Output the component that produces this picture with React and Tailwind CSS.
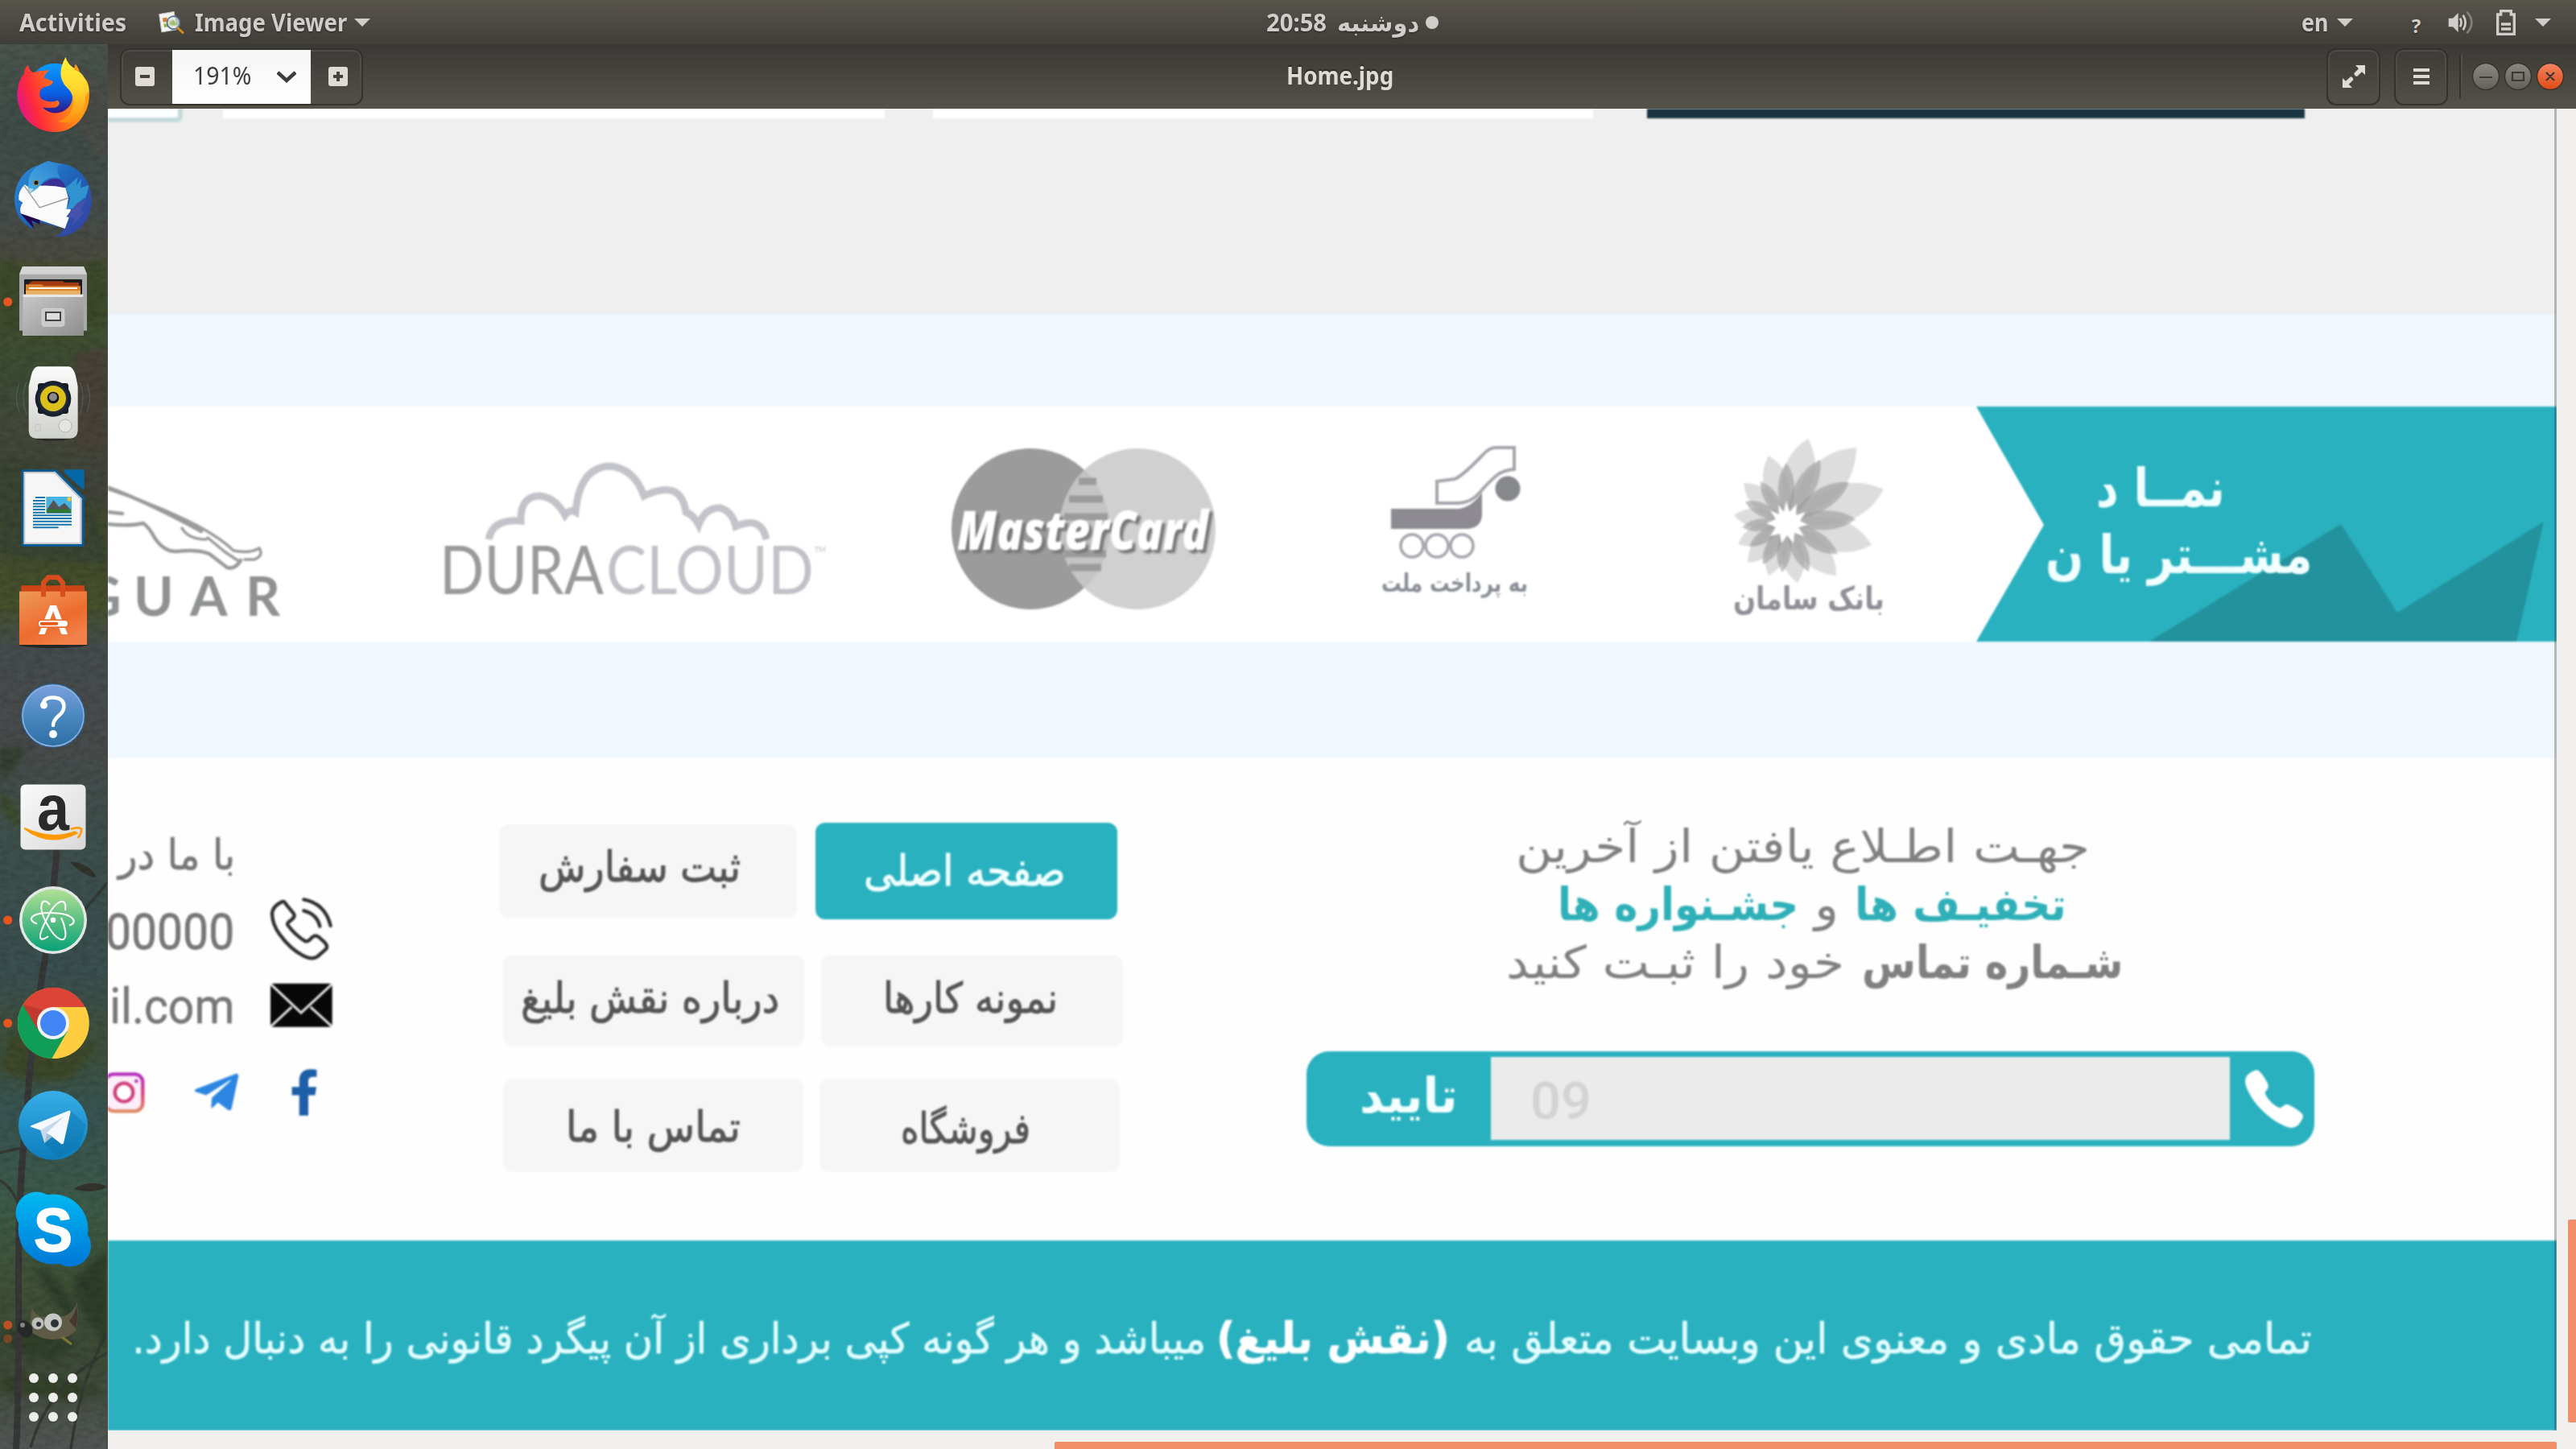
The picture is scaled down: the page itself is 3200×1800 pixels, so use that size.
import { useLayoutEffect, useRef, useState } from "react";
import { IoCall } from "react-icons/io5";
import { FaFacebookF, FaTelegramPlane } from "react-icons/fa";

/* Stretches one line of text to a given width. */
function Fit({ w, className = "", children, dir = "rtl" }) {
  const ref = useRef(null);
  const [k, setK] = useState(1);
  useLayoutEffect(() => {
    if (ref.current && ref.current.offsetWidth) setK(w / ref.current.offsetWidth);
  }, [w]);
  return (
    <div className={"shrink-0 " + className} style={{ width: w }} dir="ltr">
      <span
        ref={ref}
        dir={dir}
        className="inline-block origin-left whitespace-nowrap"
        style={{ transform: `scaleX(${k})` }}
      >
        {children}
      </span>
    </div>
  );
}

const FA = "font-['DejaVu_Sans',sans-serif]";

function Caret() {
  return (
    <svg className="h-[10px] w-5 shrink-0" viewBox="0 0 20 10">
      <path d="M0 0H20L10 10Z" fill="#cfcdca" />
    </svg>
  );
}

function TopBar() {
  return (
    <header className="flex h-[55px] shrink-0 items-center bg-linear-to-b from-[#59554d] to-[#403e39] font-['Noto_Sans','DejaVu_Sans',sans-serif] text-[30px] leading-[54px] font-bold text-[#d0cecb] [text-shadow:0_1px_2px_#222]">
      <div className="flex w-[1573px] items-center pl-6">
        <Fit w={133} dir="ltr">Activities</Fit>
        <svg className="ml-10 h-8 w-8" viewBox="590 30 100 95">
          <path d="M592 45L650 35L660 105L602 115Z" fill="#f4f4f0" stroke="#bbb" strokeWidth="3" />
          <path d="M604 62L642 56L648 92L612 98Z" fill="#dfe6cf" />
          <path d="M606 60L622 58L624 74L608 76ZM628 70L640 68L642 78L630 80Z" fill="#d77b32" />
          <path d="M610 84L644 78L646 90L612 96Z" fill="#8fb04f" />
          <circle cx="648" cy="78" r="25" fill="#dfe9e4" fillOpacity=".75" stroke="#56708f" strokeWidth="5" />
          <path d="M632 82L646 66L662 84L650 90Z" fill="#a6bf72" />
          <path d="M664 98L684 117" stroke="#d28a1c" strokeWidth="9" strokeLinecap="round" />
        </svg>
        <Fit w={189} dir="ltr" className="ml-[13px]">Image Viewer</Fit>
        <div className="ml-[9px]"><Caret /></div>
      </div>
      <div className="flex w-[1286px] items-center">
        <Fit w={75} dir="ltr">20:58</Fit>
        <Fit w={102} className="ml-[13px]">دوشنبه</Fit>
        <div className="ml-[8px] h-4 w-4 rounded-full bg-[#d0cecb]" />
      </div>
      <div className="flex items-center">
        <Fit w={33} dir="ltr">en</Fit>
        <div className="ml-[11px]"><Caret /></div>
        <div className="ml-[69px] flex h-8 w-[19px] items-center justify-center pt-2 text-[24px] leading-6">?</div>
        <svg className="ml-[30px] h-8 w-8" viewBox="724 36 96 92">
          <path d="M726 66H742L762 46V118L742 98H726Z" fill="#d0cecb" />
          <path d="M769 66Q778 82 769 98M780 54Q798 82 780 110" fill="none" stroke="#d0cecb" strokeWidth="8" />
          <path d="M794 42Q830 82 794 122" fill="none" stroke="#83807a" strokeWidth="8" />
        </svg>
        <svg className="ml-7 h-8 w-6" viewBox="906 33 72 96">
          <path d="M911 124V51H923V38H961V51H973V124Z" fill="none" stroke="#d0cecb" strokeWidth="10" />
          <path d="M924 87H960M924 105H960" stroke="#d0cecb" strokeWidth="10" />
        </svg>
        <div className="ml-6"><Caret /></div>
      </div>
    </header>
  );
}

function TitleBar() {
  const outline = "rounded-[12px] border-2 border-[#33322e] shadow-[inset_0_0_0_2px_#4f4d47]";
  return (
    <div className="flex h-20 shrink-0 items-center bg-linear-to-b from-[#3b3935] to-[#55524a] font-['Noto_Sans',sans-serif] leading-[44px]">
      <div className={"ml-[15px] flex h-[71px] w-[302px] items-center overflow-hidden " + outline}>
        <div className="flex w-[63px] justify-center pr-[5px]">
          <div className="flex h-6 w-6 items-center justify-center rounded-[3px] bg-[#e0dbd4]"><div className="h-1 w-3 bg-[#45433e]" /></div>
        </div>
        <div className="flex h-[68px] w-[172px] items-center bg-linear-to-b from-[#f5f5f5] to-white pl-[26px] text-[30px] text-[#3c3c3c]">
          <Fit w={72} dir="ltr" className="pb-[2px]">191%</Fit>
          <svg className="ml-8 h-[15px] w-6" viewBox="0 0 24 15"><path d="M1 2L12 12L23 2" fill="none" stroke="#3c3c3c" strokeWidth="4.5" /></svg>
        </div>
        <div className="flex w-[63px] justify-center pl-[4px]">
          <svg className="h-6 w-6" viewBox="0 0 24 24"><rect width="24" height="24" rx="3" fill="#e0dbd4" /><path d="M6 12H18M12 6V18" stroke="#45433e" strokeWidth="4" /></svg>
        </div>
      </div>
      <Fit w={133} dir="ltr" className="ml-[1147px] pb-[2px] text-[30px] font-bold text-[#e0dbd4] [text-shadow:0_-2px_1px_#2b2a27]">Home.jpg</Fit>
      <div className={"ml-[1159px] flex h-[71px] w-[67px] items-center justify-center " + outline}>
        <svg className="h-7 w-7" viewBox="330 243 84 84" fill="#e0dbd4">
          <path d="M378 243H414V279L402 268L384 285Q374 283 373 273L390 256Z" />
          <path d="M366 327H330V291L342 302L360 286Q370 288 370 298L353 314Z" />
        </svg>
      </div>
      <div className={"ml-[17px] flex h-[71px] w-[67px] flex-col items-center justify-center gap-1 " + outline}>
        <div className="h-1 w-5 bg-[#e0dbd4]" />
        <div className="h-1 w-5 bg-[#e0dbd4]" />
        <div className="h-1 w-5 bg-[#e0dbd4]" />
      </div>
      <div className="ml-[14px] h-14 w-1 border-l-2 border-[#35332f] bg-[#504e48]" />
      <svg className="ml-[11px] h-9 w-[118px]" viewBox="3070 77 118 36">
        <defs>
          <linearGradient id="wb" x1="0" y1="0" x2="0" y2="1"><stop stopColor="#8a8881" /><stop offset="1" stopColor="#62605a" /></linearGradient>
          <linearGradient id="wc" x1="0" y1="0" x2="0" y2="1"><stop stopColor="#f68460" /><stop offset="1" stopColor="#df4a16" /></linearGradient>
        </defs>
        <circle cx="3088" cy="95" r="16.5" fill="url(#wb)" stroke="#35332f" strokeWidth="1.5" />
        <circle cx="3128" cy="95" r="16.5" fill="url(#wb)" stroke="#35332f" strokeWidth="1.5" />
        <circle cx="3168" cy="95" r="16.5" fill="url(#wc)" stroke="#35332f" strokeWidth="1.5" />
        <path d="M3080 96H3096M3121 90H3135V100H3121ZM3163 90L3173 100M3173 90L3163 100" fill="none" stroke="#3a3833" strokeWidth="2.2" />
      </svg>
    </div>
  );
}

/* Dock icons are drawn in dock coordinates; every cell is 128 pixels high. */
function Cell({ i, h = 128, children }) {
  return (
    <svg className="relative w-[134px] shrink-0 overflow-visible" style={{ height: h }} viewBox={`0 ${55 + i * 128} 134 ${h}`}>
      {children}
    </svg>
  );
}

function Dot({ y, o = 1 }) {
  return <circle cx="9.7" cy={y} r="5.6" fill="#e95420" opacity={o} />;
}

function DockBackground() {
  return (
    <svg className="absolute inset-0 h-full w-full" viewBox="0 55 134 1745" preserveAspectRatio="none">
      <defs>
        <linearGradient id="dk" x1="0" y1="0" x2="0" y2="1">
          <stop stopColor="#4b544e" /><stop offset=".06" stopColor="#3f4d47" /><stop offset=".12" stopColor="#454d4a" />
          <stop offset=".15" stopColor="#4a4a41" /><stop offset=".165" stopColor="#46532e" /><stop offset=".23" stopColor="#3d4c33" />
          <stop offset=".28" stopColor="#44483b" /><stop offset=".32" stopColor="#40433b" /><stop offset=".34" stopColor="#414b2d" />
          <stop offset=".4" stopColor="#45502c" /><stop offset=".43" stopColor="#464c4e" /><stop offset=".5" stopColor="#484b4b" />
          <stop offset=".56" stopColor="#3e504c" /><stop offset=".66" stopColor="#3a4f50" /><stop offset=".71" stopColor="#3f503b" />
          <stop offset=".76" stopColor="#385452" /><stop offset=".83" stopColor="#3d5a48" /><stop offset=".88" stopColor="#3f5236" />
          <stop offset=".94" stopColor="#3e4a38" /><stop offset="1" stopColor="#535756" />
        </linearGradient>
        <filter id="bl"><feGaussianBlur stdDeviation="4" /></filter>
        <filter id="grain" x="0" y="0" width="100%" height="100%">
          <feTurbulence type="fractalNoise" baseFrequency=".09 .16" numOctaves="3" />
          <feColorMatrix values="0 0 0 0 0  0 0 0 0 0  0 0 0 0 0  1.4 0 0 0 -.5" />
        </filter>
      </defs>
      <rect y="55" width="134" height="1745" fill="url(#dk)" />
      <g filter="url(#bl)">
        <path d="M60 55L134 110V200Q90 180 60 55Z" fill="#504d4a" opacity=".7" />
        <path d="M0 320Q60 350 134 320V390Q60 440 0 400Z" fill="#3c4a2a" />
        <path d="M92 440L134 430V560H96Z" fill="#4a4238" />
        <path d="M0 570Q60 570 90 600T134 690V700L0 690Z" fill="#3a4530" />
        <path d="M0 930L30 925Q24 960 0 968Z" fill="#353f30" />
        <path d="M0 985Q30 1000 26 1030Q10 1020 0 1000Z" fill="#3d4c2c" />
        <path d="M10 1290Q60 1270 120 1300L90 1340Q40 1350 0 1330Z" fill="#3c4a2c" />
        <path d="M44 1570Q90 1600 96 1640Q60 1620 44 1570ZM90 1590L134 1550V1670Q100 1640 90 1590Z" fill="#2f3c2a" />
        <path d="M0 1650Q60 1650 100 1670L70 1690Q30 1690 0 1665Z" fill="#33402a" />
        <path d="M0 1710Q70 1700 134 1730L80 1740Q30 1730 0 1730Z" fill="#34422b" />
      </g>
      <path d="M71 1050Q66 1120 56 1190Q38 1300 34 1370Q22 1480 23 1600T20 1800" fill="none" stroke="#383838" strokeWidth="8" />
      <path d="M0 1466Q18 1478 24 1500M134 1655Q100 1710 88 1800M134 1680Q60 1720 38 1798M100 1136L134 1096M0 1432L60 1418" fill="none" stroke="#363a34" strokeWidth="3.5" />
      <path d="M92 1477Q110 1464 134 1474Q118 1484 92 1477ZM86 1070Q112 1072 120 1090Q106 1090 86 1070Z" fill="#34342f" />
      <rect y="55" width="134" height="1745" filter="url(#grain)" opacity=".2" />
      <rect x="132" y="55" width="2" height="1745" fill="#4a4a46" opacity=".7" />
    </svg>
  );
}

function Dock() {
  return (
    <nav className="relative flex w-[134px] shrink-0 flex-col overflow-hidden">
      <DockBackground />
      {/* Firefox */}
      <Cell i={0}>
        <defs>
          <linearGradient id="ff1" x1="0" y1=".6" x2="1" y2=".3"><stop stopColor="#e0168a" /><stop offset=".22" stopColor="#ff2b3a" /><stop offset=".6" stopColor="#ff7a1a" /><stop offset="1" stopColor="#ffb81c" /></linearGradient>
          <linearGradient id="ff2" x1="0" y1="0" x2="0" y2="1"><stop stopColor="#0a9bff" /><stop offset=".6" stopColor="#0a5de0" /><stop offset="1" stopColor="#35107a" /></linearGradient>
          <linearGradient id="ff3" x1="0" y1="0" x2="0" y2="1"><stop stopColor="#fff23a" /><stop offset=".5" stopColor="#ffd42e" /><stop offset="1" stopColor="#ff8a10" /></linearGradient>
        </defs>
        <g transform="scale(.33333)">
          <circle cx="204" cy="332" r="96" fill="url(#ff2)" />
          <path d="M105 242Q108 262 122 270Q152 262 184 262Q166 276 164 290L198 303Q196 320 165 324Q148 332 148 348Q146 368 166 374Q190 384 215 374Q230 386 210 400Q180 404 158 400Q190 432 232 416Q282 392 266 336L300 280Q336 300 332 350C330 435 275 492 204 492C125 492 64 430 64 352Q66 300 90 274Q90 254 105 242Z" fill="url(#ff1)" />
          <path d="M245 212Q248 240 290 262Q328 292 331 345Q330 385 312 425Q275 470 215 452Q262 440 272 392Q278 350 248 325Q206 280 245 212Z" fill="url(#ff3)" />
          <path d="M280 238Q294 252 296 270L276 258Z" fill="#ff9a10" />
          <path d="M331 340Q338 400 300 440Q320 400 318 360Z" fill="#ff9a10" />
        </g>
      </Cell>
      {/* Thunderbird */}
      <Cell i={1}>
        <defs>
          <linearGradient id="tb" x1="0" y1="0" x2="1" y2="1"><stop stopColor="#2a8fd8" /><stop offset=".5" stopColor="#1f62b8" /><stop offset="1" stopColor="#3a3c9e" /></linearGradient>
          <linearGradient id="tb2" x1="1" y1="0" x2="0" y2="1"><stop stopColor="#2b7fd0" /><stop offset="1" stopColor="#4aaee2" /></linearGradient>
        </defs>
        <g transform="scale(.33333)">
          <path d="M180 600Q160 606 158 612C90 625 54 680 54 748C56 800 85 840 128 854L118 830Q150 838 148 828L240 852Q222 878 202 882C290 886 342 820 342 745C340 660 280 606 205 608Z" fill="url(#tb)" />
          <path d="M76 795L128 854L118 822L148 836V815Z" fill="#22094e" />
          <path d="M92 688Q66 715 70 745L85 755Q70 775 78 796L242 852Q258 815 264 780L248 776L255 738L244 700Q190 680 108 698Z" fill="#fafafa" />
          <path d="M90 692L148 774L254 738" fill="none" stroke="#9c9c9c" strokeWidth="4" />
          <path d="M150 692Q190 655 225 670Q248 690 242 700Q200 690 150 692Z" fill="#3b2f94" />
          <path d="M180 600Q120 620 108 665L104 705L112 720Q140 705 150 690Q180 650 225 665Q200 620 230 612Z" fill="url(#tb2)" />
          <path d="M104 700L112 720L126 704Z" fill="#b8d8dc" />
          <circle cx="135" cy="681" r="9" fill="#1b1b1b" stroke="#a57a20" strokeWidth="3" />
          <path d="M245 700L290 660L285 690L304 665L300 700L332 690L320 735L285 760L290 775L247 780L262 740Z" fill="#2f93cf" />
          <path d="M285 760L322 742L300 790L318 790L270 840L278 815L247 808L268 780Z" fill="#4553ac" />
        </g>
      </Cell>
      {/* Files */}
      <Cell i={2}>
        <defs><linearGradient id="fl" x1="0" y1="0" x2="1" y2="1"><stop stopColor="#c9c9c9" /><stop offset="1" stopColor="#8d8d8d" /></linearGradient></defs>
        <Dot y={375} />
        <g transform="scale(.33333)">
          <path d="M84 993H312L324 1022V1232H72V1022Z" fill="#a9a9a9" />
          <path d="M84 993H312L324 1022H72Z" fill="#d4d4d4" />
          <rect x="90" y="1041" width="216" height="60" rx="4" fill="#1c1c1c" />
          <path d="M108 1056L120 1048H234L240 1053H294V1100H108Z" fill="#a33a12" />
          <path d="M96 1060H156L162 1066H300V1100H96Z" fill="#d98532" />
          <rect x="108" y="1071" width="180" height="6" fill="#fff" /><rect x="96" y="1083" width="204" height="14" fill="#e9b062" />
          <path d="M86 1097H310L312 1251H84Z" fill="url(#fl)" />
          <path d="M86 1097H310V1107H86Z" fill="#e8e8e8" />
          <rect x="156" y="1150" width="84" height="66" rx="10" fill="#c9c9c9" stroke="#dedede" strokeWidth="2" />
          <rect x="171" y="1164" width="54" height="30" fill="#ddd" stroke="#444" strokeWidth="6" />
        </g>
      </Cell>
      {/* Rhythmbox */}
      <Cell i={3}>
        <defs><linearGradient id="rb" x1="0" y1="0" x2="0" y2="1"><stop stopColor="#fafafa" /><stop offset="1" stopColor="#cfd1cc" /></linearGradient></defs>
        <g transform="translate(0 440) scale(.33333)">
          <ellipse cx="198" cy="305" rx="85" ry="18" fill="#000" opacity=".35" />
          <path d="M140 46H256Q272 46 282 80L290 120V285Q288 314 262 314H134Q108 314 107 285V120L116 80Q124 48 140 46Z" fill="url(#rb)" />
          <path d="M72 110Q50 160 72 215M98 105Q75 160 98 225M324 110Q346 160 324 215M298 105Q320 160 298 225" fill="none" stroke="#6e93c4" strokeWidth="3" opacity=".35" />
          <rect x="141" y="108" width="114" height="114" rx="10" fill="#181c20" />
          <circle cx="198" cy="166" r="67" fill="#16202e" /><circle cx="198" cy="166" r="56" fill="#202a38" />
          <circle cx="198" cy="165" r="48" fill="#dcc01c" /><circle cx="198" cy="162" r="22" fill="#111" /><circle cx="198" cy="160" r="15" fill="#8b8b8b" />
          <circle cx="243" cy="267" r="24" fill="#e4e5e2" stroke="#b4b6b2" strokeWidth="3" />
          <rect x="132" y="262" width="18" height="24" fill="none" stroke="#c4c6c2" strokeWidth="3" />
        </g>
      </Cell>
      {/* LibreOffice Writer */}
      <Cell i={4}>
        <g transform="translate(0 440) scale(.33333)">
          <path d="M86 430H210L314 532V711Q314 717 308 717H86Q80 717 80 711V436Q80 430 86 430Z" fill="#0a5a94" />
          <path d="M88 438H206L305 538V708H88Z" fill="#c9c9cd" /><path d="M94 444H203L298 540V702H94Z" fill="#f6f6f6" />
          <path d="M238 430H308Q314 430 314 436V504Q300 500 240 440Z" fill="#0567a6" />
          <rect x="172" y="531" width="95" height="63" fill="#46b3e6" /><path d="M175 578L200 543L220 570L240 554L264 580V592H175Z" fill="#555" /><path d="M175 578H264V590H175Z" fill="#2b7a2e" /><circle cx="258" cy="540" r="8" fill="#f0c83c" />
          <path d="M132 534H168M123 546H168M123 557H168M123 568H168M123 579H168M123 590H168M123 601H267M123 612H267M123 623H267M123 635H267M123 646H218" stroke="#1878ad" strokeWidth="6" />
        </g>
      </Cell>
      {/* Ubuntu Software */}
      <Cell i={5}>
        <defs><linearGradient id="us" x1="0" y1="0" x2=".6" y2="1"><stop stopColor="#eb9a57" /><stop offset=".4" stopColor="#ef7d42" /><stop offset=".65" stopColor="#ed6c2c" /><stop offset="1" stopColor="#f28149" /></linearGradient></defs>
        <g transform="translate(0 440) scale(.33333)">
          <ellipse cx="198" cy="1083" rx="128" ry="12" opacity=".45" />
          <path d="M80 862H315V890H80Z" fill="#cf4414" />
          <path d="M72 884L90 878L80 862V1083H324V884L304 878L315 862V884Z" fill="#cf4414" />
          <rect x="72" y="884" width="252" height="199" fill="url(#us)" />
          <path d="M162 904V852L180 832H216L234 852V904" fill="none" stroke="#d94c1c" strokeWidth="18" />
          <text x="198" y="1043" textAnchor="middle" fontFamily="Lato" fontWeight="900" fontSize="150" fill="#fff">A</text>
          <rect x="140" y="988" width="116" height="32" fill="#ed6f30" /><rect x="144" y="993" width="108" height="22" rx="11" fill="#fff" /><rect x="149" y="998" width="68" height="12" rx="6" fill="#e85a18" />
        </g>
      </Cell>
      {/* Help */}
      <Cell i={6}>
        <defs><linearGradient id="hp" x1="0" y1="0" x2="0" y2="1"><stop stopColor="#7ba0dc" /><stop offset=".5" stopColor="#4a88bf" /><stop offset="1" stopColor="#2d6ea5" /></linearGradient></defs>
        <circle cx="66" cy="889" r="40" fill="#2b6299" /><circle cx="66" cy="889" r="38" fill="url(#hp)" stroke="#8fb5e0" strokeWidth="1.5" />
        <path d="M53.500 876Q54 866.500 65 866.500Q79 866.500 79.500 877Q79.500 884 73 889Q66 895 66 901" fill="none" stroke="#fff" strokeWidth="4.500" strokeLinecap="round" />
        <circle cx="54.500" cy="876" r="4.500" fill="#fff" /><circle cx="66" cy="912" r="5" fill="#fff" />
      </Cell>
      {/* Amazon */}
      <Cell i={7}>
        <defs><linearGradient id="am" x1="0" y1="0" x2="1" y2="1"><stop stopColor="#fbfbfb" /><stop offset="1" stopColor="#d8d8d8" /></linearGradient></defs>
        <rect x="25.500" y="974.500" width="81" height="81" rx="6" fill="url(#am)" />
        <text x="66" y="1030.500" textAnchor="middle" fontFamily="Liberation Sans" fontWeight="700" fontSize="80" fill="#2a2a2a" textLength="40" lengthAdjust="spacingAndGlyphs">a</text>
        <path d="M30.500 1029.500Q60 1053 96 1035L93 1033Q65 1044 31 1029Z" fill="#ff9900" stroke="#ff9900" strokeWidth="1.500" />
        <path d="M88 1030Q96 1027 101 1029.500Q102 1035 96.500 1041" fill="none" stroke="#ff9900" strokeWidth="2.500" />
      </Cell>
      {/* Atom */}
      <Cell i={8}>
        <defs><linearGradient id="at" x1="0" y1="0" x2="0" y2="1"><stop stopColor="#b2e096" /><stop offset=".5" stopColor="#5cbf83" /><stop offset="1" stopColor="#08a277" /></linearGradient></defs>
        <Dot y={1143} />
        <circle cx="66" cy="1143" r="42" fill="#e3e8e4" /><circle cx="66" cy="1143" r="38.500" fill="url(#at)" />
        <g fill="none" stroke="#fff" strokeWidth="2">
          <path d="M86 1149.500C98 1146 92 1134 62 1134C36 1134 34 1144 46 1147.500" />
          <path d="M62 1124C52 1112 46 1126 58 1147C70 1170 84 1174 81 1156Q80 1148 76 1140" />
          <path d="M81 1131C84 1112 68 1118 58 1142C46 1164 48 1172 60 1163" />
        </g>
        <circle cx="66" cy="1143" r="3.300" fill="#fff" />
      </Cell>
      {/* Chrome */}
      <Cell i={9}>
        <Dot y={1271} />
        <circle cx="66" cy="1271" r="44" fill="#fc3" />
        <path d="M66 1271L28.500 1248A44 44 0 0 1 105.500 1251H66Z" fill="#db4437" />
        <path d="M66 1271L28.500 1248A44 44 0 0 0 64.500 1315L84 1281Z" fill="#0f9d58" />
        <path d="M66 1251H106A44 44 0 0 1 64.500 1315L84 1281Z" fill="#ffcd40" />
        <path d="M28.500 1248L46 1278L60 1256Z" fill="#c03a2e" />
        <circle cx="66" cy="1271" r="20" fill="#f3f3f3" /><circle cx="66" cy="1271" r="16" fill="#4285f4" />
      </Cell>
      {/* Telegram */}
      <Cell i={10}>
        <defs><linearGradient id="tg" x1="0" y1="0" x2="0" y2="1"><stop stopColor="#37aee8" /><stop offset="1" stopColor="#0d7dbb" /></linearGradient></defs>
        <circle cx="66" cy="1398" r="43" fill="url(#tg)" />
        <path d="M87 1379L107 1397L98 1426L72 1438L55 1420Z" fill="#0a70aa" opacity=".4" />
        <path d="M38 1398.500L86 1379.500Q88 1379.500 87.500 1382L79 1420Q78 1422 76 1421L62 1410L55.500 1420L50.500 1404L38.500 1400Z" fill="#f5f9fd" />
        <path d="M50.500 1404L80 1386.500L58 1407.500L55.500 1420Z" fill="#c6d9ea" /><path d="M55.500 1420L58 1407.500L65 1412Z" fill="#9fbdd3" />
      </Cell>
      {/* Skype */}
      <Cell i={11}>
        <defs><linearGradient id="sk" gradientUnits="userSpaceOnUse" x1="0" y1="1480" x2="0" y2="1573"><stop stopColor="#00b9f2" /><stop offset="1" stopColor="#0078d7" /></linearGradient></defs>
        <g fill="url(#sk)"><circle cx="66" cy="1527" r="43.500" /><circle cx="45.500" cy="1506.500" r="26" /><circle cx="87" cy="1547.500" r="26" /></g>
        <text x="66" y="1554" textAnchor="middle" fontFamily="Liberation Sans" fontWeight="700" fontSize="76" fill="#fff" stroke="#fff" strokeWidth="1.500" strokeLinejoin="round" textLength="48" lengthAdjust="spacingAndGlyphs">S</text>
      </Cell>
      {/* GIMP */}
      <Cell i={12} h={100}>
        <Dot y={1646} o={0.75} /><Dot y={1663} o={0.4} />
        <path d="M40 1625Q46 1636 52 1636H72Q88 1636 96 1618Q98 1640 94 1653Q84 1664 66 1664Q48 1664 36 1652Z" fill="#5e5a45" />
        <path d="M86 1641Q94 1632 95 1620Q98 1636 94 1650Z" fill="#463830" />
        <path d="M77 1661L89 1670" stroke="#7d7836" strokeWidth="3" />
        <ellipse cx="31" cy="1651" rx="9" ry="11" fill="#252827" transform="rotate(-30 31 1651)" /><circle cx="28" cy="1646" r="3" fill="#868686" />
        <circle cx="47" cy="1644" r="7.500" fill="#bcbeba" /><circle cx="66" cy="1642.500" r="11" fill="#c6c8c4" />
        <circle cx="48" cy="1645" r="3" fill="#2b3232" /><circle cx="68" cy="1644" r="5" fill="#2b3232" />
      </Cell>
      <div className="relative mt-[15px] ml-9 grid w-[60px] grid-cols-3 gap-3">
        {Array.from({ length: 9 }, (_, n) => <div key={n} className="h-3 w-3 rounded-full bg-[#eeeeec]" />)}
      </div>
    </nav>
  );
}

function petal([tx, ty], w) {
  const cx = 2219, cy = 648;
  const dx = tx - cx, dy = ty - cy;
  const mx = cx + dx * 0.62, my = cy + dy * 0.62;
  return `M${cx} ${cy}Q${mx - dy * w} ${my + dx * w} ${tx} ${ty}Q${mx + dy * w} ${my - dx * w} ${cx} ${cy}Z`;
}
const OUTER = [[2246, 545], [2306, 556], [2340, 608], [2325, 677], [2281, 715], [2233, 724], [2197, 715], [2171, 699], [2159, 676], [2154, 640], [2166, 600], [2197, 566]];
const INNER = [[2219, 575], [2261, 571], [2297, 599], [2305, 645], [2283, 688], [2247, 710], [2214, 711], [2190, 701], [2173, 679], [2164, 655], [2168, 623], [2187, 598]];

function Brands() {
  return (
    <div className="flex h-[292px] shrink-0 bg-white">
      <svg className="h-[292px] w-[220px] shrink-0" viewBox="134 505 220 292">
        <g fill="none" stroke="#999b9a" strokeWidth="4.500" strokeLinecap="round">
          <path d="M130 606Q180 622 225 643T290 684Q310 688 322 681Q328 690 316 695L304 695" strokeWidth="3.500" />
          <path d="M130 604Q180 622 250 660" />
          <path d="M134 636L152 638M134 651Q160 654 178 650Q186 656 192 668Q204 686 220 685Q245 682 260 688L282 705Q292 708 299 696" />
          <path d="M226 656Q234 670 256 670M258 668L280 686L298 698" strokeWidth="3.500" />
        </g>
        <text x="102 166 236 305" y="765" fontFamily="Lato" fontWeight="700" fontSize="67" fill="#8f9291">GUAR</text>
      </svg>
      <svg className="ml-[186px] h-[292px] w-[490px] shrink-0" viewBox="540 505 490 292">
        <path d="M607 670Q612 644 647 647Q646 616 671 616Q690 618 702 640Q708 632 715 636Q720 580 758 579Q788 582 800 616Q846 594 852 636Q862 640 868 652Q876 630 895 631Q910 636 914 654Q946 640 952 670" fill="none" stroke="#c3c4ca" strokeWidth="9" />
        <g fontFamily="Lato" fontSize="84" fontWeight="400">
          <text x="546" y="738" textLength="204" lengthAdjust="spacingAndGlyphs" fill="#999b9b">DURA</text>
          <text x="753" y="738" textLength="258" lengthAdjust="spacingAndGlyphs" fill="#c0c2c8">CLOUD</text>
          <text x="1012" y="686" fontSize="9" fill="#b5b7bc">TM</text>
        </g>
      </svg>
      <svg className="ml-[145px] h-[292px] w-[345px] shrink-0" viewBox="1175 505 345 292">
        <defs><clipPath id="lens"><ellipse cx="1280" cy="657" rx="98" ry="100" /></clipPath></defs>
        <ellipse cx="1413" cy="657" rx="97" ry="100" fill="#d0d0d0" />
        <ellipse cx="1280" cy="657" rx="98" ry="100" fill="#9b9b9b" />
        <g clipPath="url(#lens)"><ellipse cx="1413" cy="657" rx="97" ry="100" fill="#c4c4c4" /></g>
        <path d="M1340 598H1362M1328 620H1370M1322 642H1376M1322 688H1374M1328 705H1368" stroke="#9b9b9b" strokeWidth="9" />
        <g fontFamily="Open Sans" fontWeight="800" fontStyle="italic" fontSize="68" className="drop-shadow-[4px_4px_1px_#777777]">
          <text x="1189" y="683" textLength="312" lengthAdjust="spacingAndGlyphs" fill="#fff">MasterCard</text>
        </g>
      </svg>
      <svg className="ml-[185px] h-[292px] w-[205px] shrink-0" viewBox="1705 505 205 292">
        <path d="M1785 625V598L1807 595Q1816 592 1842 565Q1850 556 1858 556H1881V583Q1868 584 1860 590Q1850 598 1838 612Q1828 624 1812 625Z" fill="none" stroke="#a3a5ab" strokeWidth="4" />
        <path d="M1728 632H1812Q1828 630 1841 612V667Q1840 692 1822 693H1728Z" fill="none" />
        <path d="M1728 632H1812Q1828 630 1841 612V640Q1840 656 1822 657H1728Z" fill="#8d8b91" />
        <circle cx="1873" cy="607" r="15.500" fill="#86888c" />
        <g fill="none" stroke="#a3a5ab" strokeWidth="3.500"><circle cx="1754" cy="678" r="14" /><circle cx="1785" cy="678" r="14" /><circle cx="1816" cy="678" r="14" /></g>
        <text x="1898" y="735" direction="rtl" fontFamily="DejaVu Sans" fontWeight="700" fontSize="31" textLength="182" lengthAdjust="spacingAndGlyphs" fill="#8a8e96">به پرداخت ملت</text>
      </svg>
      <svg className="ml-[230px] h-[292px] w-[210px] shrink-0" viewBox="2140 505 210 292">
        {OUTER.map((t, n) => <path key={n} d={petal(t, 0.36)} fill="#c6c6c6" opacity=".6" />)}
        {INNER.map((t, n) => <path key={n} d={petal(t, 0.28)} fill="#9a9a9a" opacity=".6" />)}
        <path d="M2219 622L2223 636L2232 626L2231 640L2243 636L2236 647L2246 652L2234 655L2241 666L2229 662L2228 675L2220 665L2213 675L2211 663L2199 666L2206 655L2194 650L2206 645L2199 634L2210 639L2209 627L2216 636Z" fill="#fff" />
        <circle cx="2219" cy="650" r="15" fill="#fff" />
        <text x="2341" y="757" direction="rtl" fontFamily="DejaVu Sans" fontWeight="700" fontSize="40" textLength="188" lengthAdjust="spacingAndGlyphs" fill="#8f9196">بانک سامان</text>
      </svg>
      <div className="relative ml-[105px] w-[721px] shrink-0">
        <svg className="absolute inset-0 h-full w-full" viewBox="2455 505 721 292" preserveAspectRatio="none">
          <path d="M2455 505H3176V797H2455L2539 652Z" fill="#29b1bf" />
          <path d="M2670 797L2908 651L2978 761L3160 648L3126 797Z" fill="#22929e" />
        </svg>
        <div className={"relative pt-[60px] text-[66px] leading-[83px] font-bold text-[#f2ffff] " + FA}>
          <Fit w={160} className="ml-[149px]">نمــا د</Fit>
          <Fit w={332} className="ml-[86px]">مشـــتر یا ن</Fit>
        </div>
      </div>
    </div>
  );
}

function Contact() {
  return (
    <div className="w-[280px] shrink-0 pt-[90px] text-[#777]">
      <Fit w={145} className={"ml-[13px] text-[52px] leading-[60px] [-webkit-text-stroke:0.6px] " + FA}>با ما در</Fit>
      <div className="mt-[22px] flex h-20 items-center gap-[43px]">
        <div className="flex w-[157px] justify-end overflow-hidden pt-2 font-['Roboto',sans-serif] text-[62px] leading-[68px] [-webkit-text-stroke:0.8px]">
          <span className="origin-right scale-x-[.92]">00000</span>
        </div>
        <svg className="h-20 w-20 shrink-0" viewBox="1000 640 240 240" fill="none" stroke="#2f2f2f" strokeWidth="13" strokeLinejoin="round" strokeLinecap="round">
          <path d="M1050 658Q1012 676 1012 705Q1014 745 1040 780Q1080 835 1125 858Q1160 878 1182 862L1214 834Q1220 822 1208 810L1186 790Q1172 780 1160 792Q1148 808 1136 806Q1100 785 1070 745Q1066 738 1084 726Q1100 714 1092 702L1064 668Q1058 656 1050 658Z" />
          <path d="M1130 650Q1210 665 1230 748M1130 692Q1180 705 1190 750" />
        </svg>
      </div>
      <div className="mt-[26px] flex h-[57px] items-center gap-[43px]">
        <div className="flex w-[157px] justify-end overflow-hidden pt-[2px] font-['Roboto',sans-serif] text-[62px] leading-[68px] [-webkit-text-stroke:0.6px]">
          <span className="origin-right scale-x-[.92]">ail.com</span>
        </div>
        <svg className="h-[57px] w-20 shrink-0" viewBox="1000 960 240 170">
          <rect x="1006" y="965" width="230" height="162" rx="10" fill="#080808" />
          <path d="M1008 968L1120 1074L1234 968M1008 1124L1085 1052M1234 1124L1155 1052" fill="none" stroke="#e4e4e4" strokeWidth="9" />
        </svg>
      </div>
      <div className="mt-[50px] flex h-[60px] items-center">
        <svg className="h-[52px] w-[48px] shrink-0" viewBox="402 1294 144 156" fill="none" strokeWidth="13">
          <defs><linearGradient id="ig" x1="0" y1="0" x2="0" y2="1"><stop stopColor="#b62fc0" /><stop offset=".55" stopColor="#d8457e" /><stop offset="1" stopColor="#e08a60" /></linearGradient></defs>
          <rect x="394" y="1304" width="138" height="138" rx="30" fill="#fdeefa" stroke="url(#ig)" />
          <circle cx="462" cy="1372" r="34" fill="#fff" stroke="#d0407e" /><circle cx="508" cy="1330" r="7" fill="#b83ab0" stroke="none" />
        </svg>
        <FaTelegramPlane className="ml-[56px] h-[62px] w-[62px] text-[#2b86e2]" />
        <FaFacebookF className="ml-[60px] h-[58px] w-[36px] text-[#1d5ea8]" />
      </div>
    </div>
  );
}

function NavButton({ w, className, children }) {
  return (
    <div className={"flex shrink-0 items-center justify-center rounded-[12px] " + className}>
      <Fit w={w}>{children}</Fit>
    </div>
  );
}

function Menu() {
  return (
    <div className={"ml-[206px] w-[776px] shrink-0 pt-20 text-[52px] leading-[60px] text-[#555] [-webkit-text-stroke:1px] " + FA}>
      <div className="flex items-center gap-[23px]">
        <NavButton w={251} className="h-[116px] w-[370px] bg-[#f6f6f6] pr-[22px] pb-[10px]">ثبت سفارش</NavButton>
        <NavButton w={251} className="h-[120px] w-[375px] bg-[#29b1bf] pr-1 text-[#f0ffff]">صفحه اصلی</NavButton>
      </div>
      <div className="mt-11 ml-[5px] flex gap-[21px]">
        <NavButton w={321} className="h-[114px] w-[374px] bg-[#f6f6f6] pr-[9px] pb-[6px]">درباره نقش بلیغ</NavButton>
        <NavButton w={217} className="h-[114px] w-[375px] bg-[#f6f6f6] pr-[4px] pb-[6px]">نمونه کارها</NavButton>
      </div>
      <div className="mt-10 ml-[5px] flex gap-5">
        <NavButton w={217} className="h-[116px] w-[373px] bg-[#f6f6f6] pt-[3px]">تماس با ما</NavButton>
        <NavButton w={161} className="h-[116px] w-[373px] bg-[#f6f6f6] pt-2 pr-[10px]">فروشگاه</NavButton>
      </div>
    </div>
  );
}

function Subscribe() {
  return (
    <div className={"ml-[227px] w-[1252px] shrink-0 pt-[74px] text-[56px] leading-[72px] text-[#808080] " + FA}>
      <Fit w={713} className="ml-[260px]">جهـت اطـلاع یافتن از آخرین</Fit>
      <div className="flex pl-[312px]">
        <Fit w={299} className="font-bold text-[#2fb0b8]">جشـنواره ها</Fit>
        <Fit w={30} className="ml-[20px]">و</Fit>
        <Fit w={263} className="ml-[20px] font-bold text-[#2fb0b8]">تخفیـف ها</Fit>
      </div>
      <div className="flex pl-[248px]">
        <Fit w={420}>خود را ثبـت کنید</Fit>
        <Fit w={324} className="ml-[22px] font-bold">شـماره تماس</Fit>
      </div>
      <div className="mt-[74px] flex h-[118px] rounded-[28px] bg-[#29b1bf]">
        <div className="w-[229px] pt-[19px] pl-[66px] text-[60px] font-bold text-[#f4ffff]"><Fit w={122}>تایید</Fit></div>
        <div className="mt-[7px] flex h-[103px] w-[918px] items-center bg-[#ebebeb] pt-[6px] pl-[49px] font-['Roboto',sans-serif] text-[65px] font-medium text-[#d3d3d3]"><Fit w={76} dir="ltr">09</Fit></div>
        <div className="flex flex-1 items-center pl-[14px]"><IoCall className="h-[82px] w-[82px] text-white" /></div>
      </div>
    </div>
  );
}

function Picture() {
  return (
    <div className="relative h-[1642px] w-[3042px] shrink-0 overflow-hidden">
      <div className="flex h-[1642px] flex-col bg-white blur-[0.8px]">
        <div className="flex h-[255px] shrink-0 bg-[#efefef]">
          <div className="h-[17px] w-[93px] rounded-br-[8px] border-r-[6px] border-b-[6px] border-[#c4dada] bg-[#fbffff]" />
          <div className="ml-[50px] h-3 w-[822px] bg-white" />
          <div className="ml-[60px] h-3 w-[820px] bg-white" />
          <div className="ml-[67px] h-[12px] w-[817px] bg-[#1b3444]" />
        </div>
        <div className="h-[115px] shrink-0 bg-[#f0f7fe]" />
        <Brands />
        <div className="h-[145px] shrink-0 bg-[#f0f7fe]" />
        <div className="flex h-[599px] shrink-0 bg-[#fefefe]">
          <Contact />
          <Menu />
          <Subscribe />
        </div>
        <div className={"flex h-[236px] shrink-0 bg-[#29b1bf] pt-[87px] pl-[30px] text-[52px] leading-[70px] text-[#e2fdff] [-webkit-text-stroke:0.6px] " + FA}>
          <Fit w={1334}>میباشد و هر گونه کپی برداری از آن پیگرد قانونی را به دنبال دارد.</Fit>
          <Fit w={290} className="ml-[13px] text-[54px] font-bold text-white">(نقش بلیغ)</Fit>
          <Fit w={1053} className="ml-[18px]">تمامی حقوق مادی و معنوی این وبسایت متعلق به</Fit>
        </div>
      </div>
      <div className="absolute inset-y-0 right-0 w-[3px] bg-black/25" />
    </div>
  );
}

export default function App() {
  return (
    <div className="flex h-[1800px] w-[3200px] flex-col overflow-hidden">
      <TopBar />
      <div className="flex h-[1745px]">
        <Dock />
        <div className="flex w-[3066px] flex-col bg-[#f1f0ee]">
          <TitleBar />
          <div className="flex h-[1642px]">
            <Picture />
            <div className="flex w-6 flex-col items-end">
              <div className="mt-[1380px] h-[252px] w-[10px] rounded-l-[2px] bg-[#f08f69]" />
            </div>
          </div>
          <div className="mt-[14px] ml-[1176px] h-[9px] w-[1866px] rounded-t-[2px] bg-[#f08f69]" />
        </div>
      </div>
    </div>
  );
}
